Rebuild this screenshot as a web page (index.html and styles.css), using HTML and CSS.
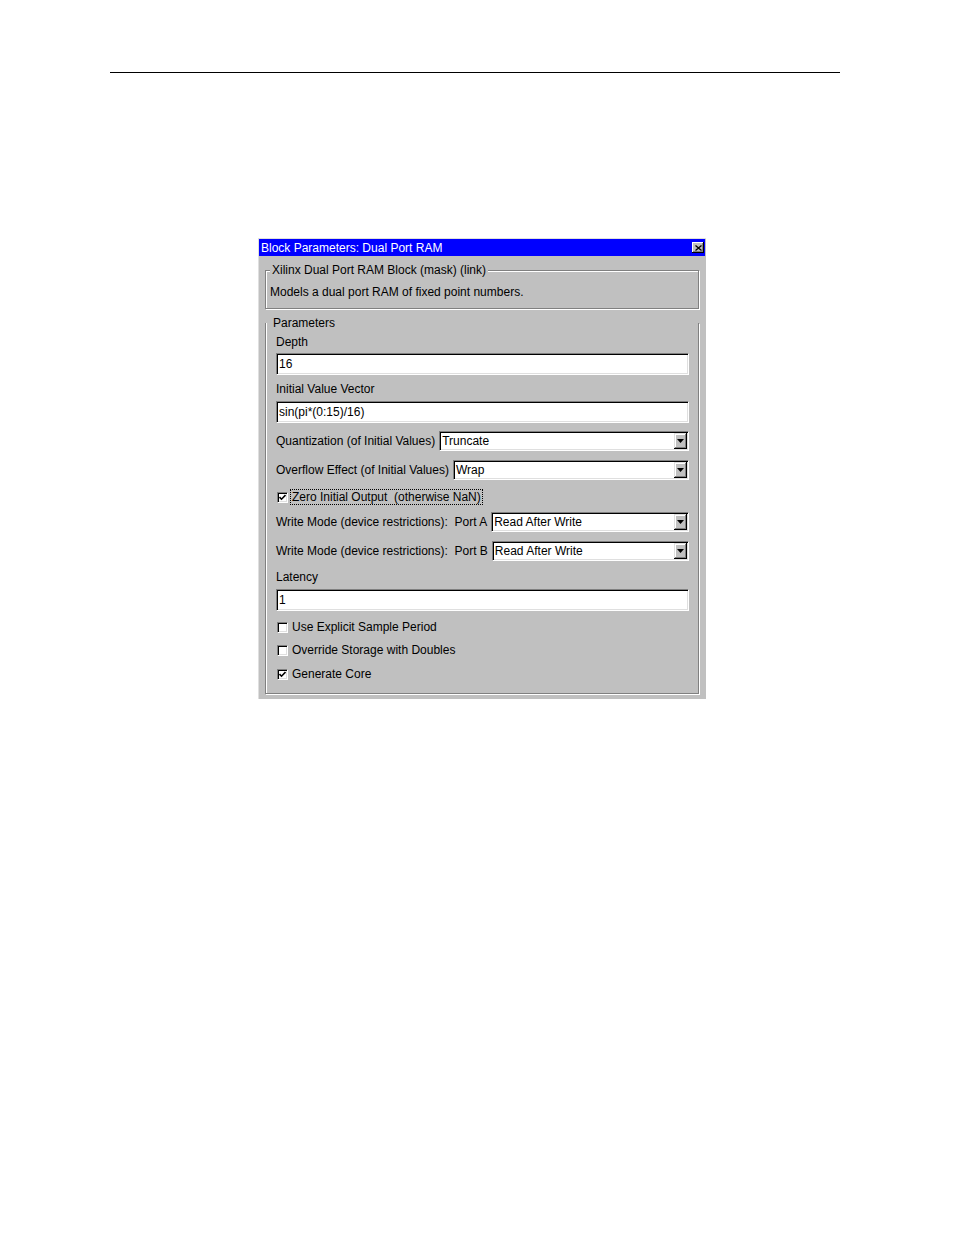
FILE: index.html
```html
<!DOCTYPE html>
<html>
<head>
<meta charset="utf-8">
<link rel="stylesheet" href="styles.css">
</head>
<body>
<div class="page">
  <div class="rule"></div>
  <div class="dialog">
    <div class="titlebar">
      <span class="title">Block Parameters: Dual Port RAM</span>
      <span class="close"><svg width="7" height="6" viewBox="0 0 7 6"><path d="M0.5 0.5 L6.5 5.5 M6.5 0.5 L0.5 5.5" stroke="#000" stroke-width="1.3" fill="none"/></svg></span>
    </div>
    <fieldset class="group g1">
      <legend>Xilinx Dual Port RAM Block (mask) (link)</legend>
      <div class="desc">Models a dual port RAM of fixed point numbers.</div>
    </fieldset>
    <fieldset class="group g2">
      <legend>Parameters</legend>
      <div class="lbl">Depth</div>
      <div class="field s4">16</div>
      <div class="lbl s7">Initial Value Vector</div>
      <div class="field s5">sin(pi*(0:15)/16)</div>
      <div class="row s8">
        <span class="rlbl">Quantization (of Initial Values)</span>
        <div class="select"><span class="val">Truncate</span><span class="btn"><svg width="7" height="4" viewBox="0 0 7 4"><path d="M0 0 H7 L3.5 4 Z" fill="#000"/></svg></span></div>
      </div>
      <div class="row s9">
        <span class="rlbl">Overflow Effect (of Initial Values)</span>
        <div class="select"><span class="val">Wrap</span><span class="btn"><svg width="7" height="4" viewBox="0 0 7 4"><path d="M0 0 H7 L3.5 4 Z" fill="#000"/></svg></span></div>
      </div>
      <div class="check s9">
        <span class="box"><svg width="7" height="7" viewBox="0 0 7 7"><path d="M0.5 3 L2.5 5.2 L6.5 1" stroke="#000" stroke-width="1.6" fill="none"/></svg></span>
        <span class="clbl focus">Zero Initial Output&nbsp; (otherwise NaN)</span>
      </div>
      <div class="row s7">
        <span class="rlbl">Write Mode (device restrictions):&nbsp; Port A</span>
        <div class="select"><span class="val">Read After Write</span><span class="btn"><svg width="7" height="4" viewBox="0 0 7 4"><path d="M0 0 H7 L3.5 4 Z" fill="#000"/></svg></span></div>
      </div>
      <div class="row s9">
        <span class="rlbl">Write Mode (device restrictions):&nbsp; Port B</span>
        <div class="select"><span class="val">Read After Write</span><span class="btn"><svg width="7" height="4" viewBox="0 0 7 4"><path d="M0 0 H7 L3.5 4 Z" fill="#000"/></svg></span></div>
      </div>
      <div class="lbl s9">Latency</div>
      <div class="field s5">1</div>
      <div class="check s8">
        <span class="box"></span>
        <span class="clbl">Use Explicit Sample Period</span>
      </div>
      <div class="check s7">
        <span class="box"></span>
        <span class="clbl">Override Storage with Doubles</span>
      </div>
      <div class="check s8">
        <span class="box"><svg width="7" height="7" viewBox="0 0 7 7"><path d="M0.5 3 L2.5 5.2 L6.5 1" stroke="#000" stroke-width="1.6" fill="none"/></svg></span>
        <span class="clbl">Generate Core</span>
      </div>
    </fieldset>
  </div>
</div>
</body>
</html>
```

FILE: styles.css
```css
* { box-sizing: border-box; }
html, body { margin: 0; padding: 0; background: #fff; }
body {
  font-family: "Liberation Sans", Arial, sans-serif;
  font-size: 12px;
  color: #000;
}
.page { padding-top: 72px; }
.rule { margin-left: 110px; width: 730px; height: 1px; background: #000; }

.dialog {
  margin: 165px 0 0 258px;
  width: 448px;
  height: 461px;
  background: #c0c0c0;
  padding: 1px;
  box-shadow: inset 1px 1px 0 #dfdfdf;
}
.titlebar {
  height: 17px;
  background: #0000ff;
  color: #fff;
  display: flex;
  align-items: center;
  justify-content: space-between;
  padding: 1px 1px 0 2px;
  line-height: 16px;
}
.title { white-space: nowrap; }
.close {
  width: 12px;
  height: 11px;
  margin-top: -1px;
  background: #c0c0c0;
  box-shadow: inset -1px -1px 0 #000, inset 1px 1px 0 #fff, inset -2px -2px 0 #808080;
  display: flex;
  align-items: center;
  justify-content: center;
}
.close svg { display: block; }

.group {
  margin: 0 0 0 6px;
  width: 434px;
  min-width: 0;
  border: 1px solid #808080;
  box-shadow: inset 1px 1px 0 #fff, 1px 1px 0 #fff;
}
.group legend {
  line-height: 14px;
  height: 14px;
  background: #c0c0c0;
  white-space: nowrap;
}
.g1 {
  margin-top: 7px;
  padding: 7px 4px 10px 4px;
}
.g1 legend { padding: 0 2px; }
.desc { line-height: 14px; height: 14px; white-space: nowrap; padding-top: 1px; }

.g2 {
  margin-top: 7px;
  height: 378px;
  border-top: 0;
  box-shadow: inset 1px 0 0 #fff, 1px 1px 0 #fff;
  padding: 5px 9px 0 10px;
  display: flex;
  flex-direction: column;
}
.g2 legend { padding: 0; margin-left: -3px; background: transparent; }

.s4 { margin-top: 4px; }
.s5 { margin-top: 5px; }
.s7 { margin-top: 7px; }
.s8 { margin-top: 8px; }
.s9 { margin-top: 9px; }

.lbl { line-height: 14px; height: 14px; white-space: nowrap; }

.field {
  height: 22px;
  background: #fff;
  border-top: 1px solid #808080;
  border-left: 1px solid #808080;
  border-bottom: 1px solid #fff;
  border-right: 1px solid #fff;
  box-shadow: inset 1px 1px 0 #000, inset -1px -1px 0 #dfdfdf;
  padding-left: 2px;
  line-height: 20px;
  white-space: nowrap;
}

.row {
  display: flex;
  align-items: center;
  height: 20px;
  gap: 4px;
}
.rlbl { white-space: nowrap; line-height: 20px; }
.select {
  flex: 1;
  height: 20px;
  background: #fff;
  border-top: 1px solid #808080;
  border-left: 1px solid #808080;
  border-bottom: 1px solid #fff;
  border-right: 1px solid #fff;
  box-shadow: inset 1px 1px 0 #000, inset -1px -1px 0 #dfdfdf;
  display: flex;
  align-items: center;
  justify-content: space-between;
  padding: 1px 1px 1px 2px;
}
.val { line-height: 16px; white-space: nowrap; }
.btn {
  width: 13px;
  height: 16px;
  background: #c0c0c0;
  box-shadow: inset -1px -1px 0 #000, inset 1px 1px 0 #dfdfdf, inset -2px -2px 0 #808080, inset 2px 2px 0 #fff;
  display: flex;
  align-items: center;
  justify-content: center;
}
.btn svg { display: block; }

.check {
  display: flex;
  align-items: center;
  height: 16px;
}
.box {
  width: 11px;
  height: 11px;
  margin-left: 1px;
  background: #fff;
  border-top: 1px solid #808080;
  border-left: 1px solid #808080;
  border-bottom: 1px solid #fff;
  border-right: 1px solid #fff;
  box-shadow: inset 1px 1px 0 #000, inset -1px -1px 0 #dfdfdf;
  display: flex;
  align-items: center;
  justify-content: center;
  flex: none;
}
.box svg { display: block; }
.clbl {
  margin-left: 4px;
  line-height: 14px;
  white-space: nowrap;
}
.clbl.focus {
  margin-left: 2px;
  border: 1px dotted #000;
  padding: 0 1px;
  line-height: 14px;
}
```
